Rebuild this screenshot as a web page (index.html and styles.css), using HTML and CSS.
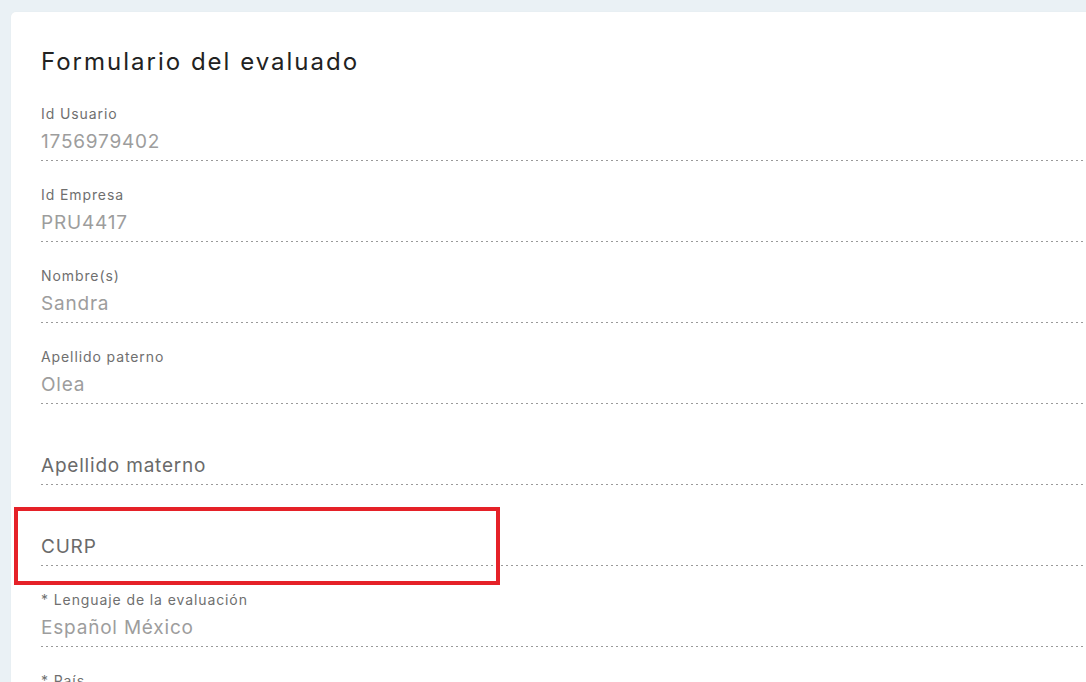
FILE: index.html
```html
<!DOCTYPE html>
<html lang="es">
<head>
<meta charset="utf-8">
<title>Formulario del evaluado</title>
<link rel="stylesheet" href="styles.css">
</head>
<body>
<div class="page">
  <section class="card">
    <h2 class="title">Formulario del evaluado</h2>
    <div class="field">
      <div class="label">Id Usuario</div>
      <div class="value">1756979402</div>
      <div class="line"></div>
    </div>
    <div class="field">
      <div class="label">Id Empresa</div>
      <div class="value">PRU4417</div>
      <div class="line"></div>
    </div>
    <div class="field">
      <div class="label">Nombre(s)</div>
      <div class="value">Sandra</div>
      <div class="line"></div>
    </div>
    <div class="field">
      <div class="label">Apellido paterno</div>
      <div class="value">Olea</div>
      <div class="line"></div>
    </div>
    <div class="field">
      <div class="label"></div>
      <div class="value placeholder">Apellido materno</div>
      <div class="line"></div>
    </div>
    <div class="field highlighted">
      <div class="label"></div>
      <div class="value placeholder">CURP</div>
      <div class="line"></div>
      <div class="mark"></div>
    </div>
    <div class="field">
      <div class="label">* Lenguaje de la evaluación</div>
      <div class="value">Español México</div>
      <div class="line"></div>
    </div>
    <div class="field">
      <div class="label">* País</div>
      <div class="value">México</div>
      <div class="line"></div>
    </div>
  </section>
</div>
</body>
</html>
```
FILE: styles.css
```css
html, body {
  margin: 0;
  padding: 0;
  height: 100%;
  overflow: hidden;
}
body {
  background: #eaf1f5;
  font-family: "Inter", "Open Sans", sans-serif;
}
.page {
  padding: 12px 0 0 11px;
  width: 1102px;
}
.card {
  background: #ffffff;
  border-radius: 5px;
  padding: 34px 30px 40px 30px;
  box-shadow: 0 0 2px rgba(0, 0, 0, 0.04);
}
.title {
  margin: 0 0 2px 0;
  font-size: 24px;
  line-height: 32px;
  font-weight: 400;
  letter-spacing: 2px;
  color: #222222;
}
.field {
  position: relative;
  padding-top: 24px;
  display: flex;
  flex-direction: column;
}
.label {
  height: 20px;
  line-height: 20px;
  font-size: 14px;
  letter-spacing: 0.9px;
  color: #6f6f6f;
}
.value {
  margin-top: 6px;
  height: 24px;
  line-height: 24px;
  font-size: 19px;
  letter-spacing: 0.8px;
  color: #9d9d9d;
}
.value.placeholder {
  color: #6a6a6a;
}
.line {
  margin-top: 6px;
  height: 1px;
  background-image: repeating-linear-gradient(to right, #9a9a9a 0 2px, transparent 2px 5px);
}
.mark {
  position: absolute;
  left: -27px;
  top: 22px;
  width: 478px;
  height: 70px;
  border: 4px solid #e52128;
}
```
